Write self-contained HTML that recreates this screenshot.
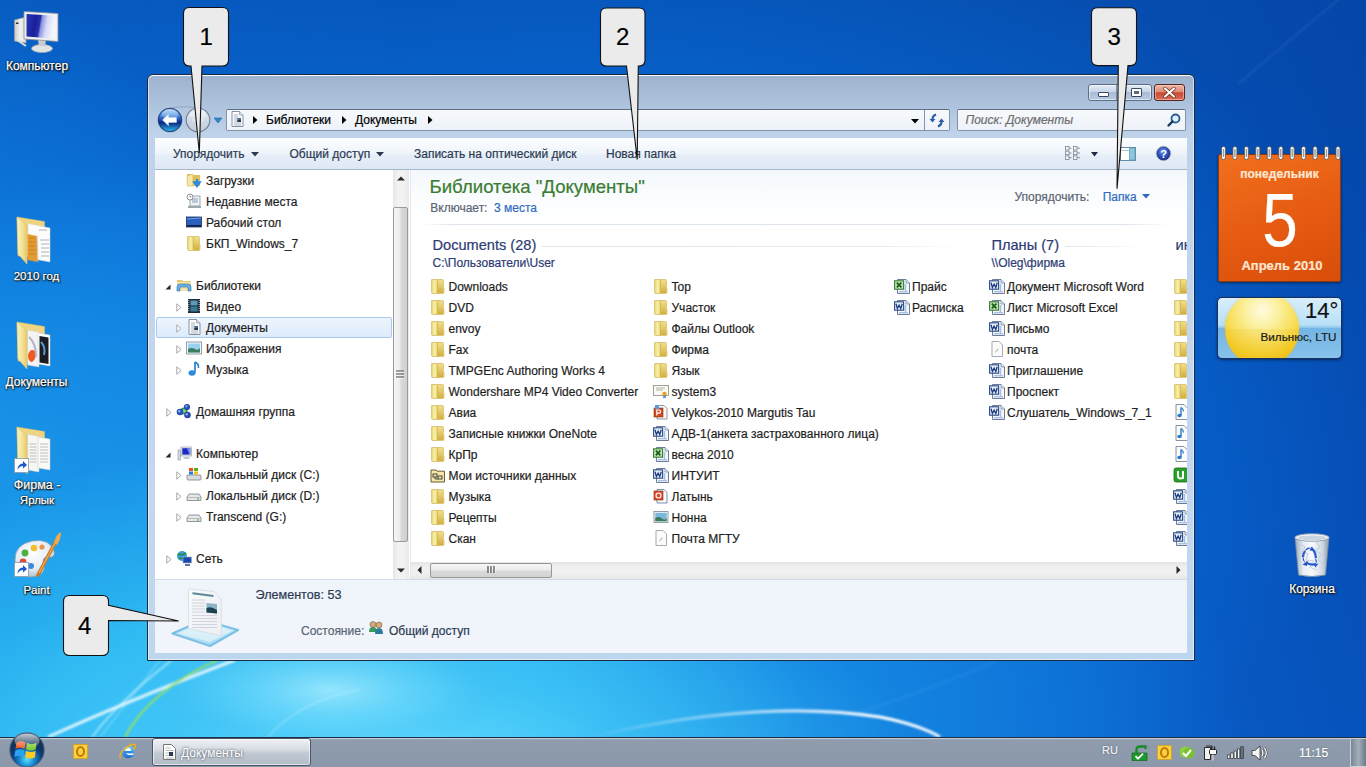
<!DOCTYPE html><html><head><meta charset="utf-8"><style>*{margin:0;padding:0;box-sizing:border-box}
html,body{width:1366px;height:767px;overflow:hidden}
body{position:relative;font-family:"Liberation Sans",sans-serif;font-size:12px;color:#1e1e1e;background:#0a56b8}
.a{position:absolute}
.t{position:absolute;white-space:nowrap;-webkit-text-stroke:.2px currentColor}
svg{display:block;overflow:visible}
.ic{position:absolute}
#bg{left:0;top:0;width:1366px;height:767px;
background:
radial-gradient(ellipse 520px 200px at 400px 767px, rgba(110,225,255,.75) 0%, rgba(80,205,250,.45) 45%, rgba(60,190,245,0) 100%),
radial-gradient(ellipse 950px 640px at 300px 790px, #3cc6f8 0%, #2cb8f2 30%, rgba(26,150,232,.75) 55%, rgba(16,120,220,0) 100%),
radial-gradient(ellipse 360px 760px at -30px 740px, rgba(40,190,250,.9) 0%, rgba(24,150,236,.55) 50%, rgba(10,110,220,0) 100%),
radial-gradient(ellipse 820px 520px at 560px 400px, rgba(8,128,240,.6) 0%, rgba(8,125,238,.42) 55%, rgba(8,120,235,0) 100%),
linear-gradient(90deg, rgba(10,115,225,.35) 0%, rgba(10,80,190,0) 30%, rgba(10,80,190,0) 80%, rgba(2,50,150,.3) 100%),
linear-gradient(180deg,#064eb0 0%,#0654ba 35%,#085cc6 70%,#0960cc 100%);}
.dl{position:absolute;white-space:nowrap;color:#fff;-webkit-text-stroke:.25px #fff;text-shadow:0 1px 1px #000,0 0 2px #000,1px 1px 2px rgba(0,0,0,.8)}
#win{left:147px;top:74px;width:1048px;height:587px;border:1px solid #1c2a40;border-radius:6px 6px 0 0;
background:linear-gradient(180deg,#9db2ce 0px,#a8bdd8 20px,#b4c9e2 42px,#bed3ea 58px,#c4d7ee 70%,#bcd6ee 100%);
box-shadow:inset 0 1px 0 rgba(255,255,255,.9),inset 0 0 0 1px rgba(255,255,255,.55)}
</style></head><body>

<svg width="0" height="0" style="position:absolute">
<defs>
<linearGradient id="gFold" x1="0" y1="0" x2="1" y2="1">
<stop offset="0" stop-color="#fff4c0"/><stop offset="1" stop-color="#e2b84a"/></linearGradient>
<linearGradient id="gFoldB" x1="0" y1="0" x2="0" y2="1">
<stop offset="0" stop-color="#f2d77a"/><stop offset="1" stop-color="#c99a2e"/></linearGradient>
<linearGradient id="gFoldR" x1="0" y1="0" x2="0" y2="1"><stop offset="0" stop-color="#f2de88"/><stop offset="1" stop-color="#d2b040"/></linearGradient>
<linearGradient id="gFoldL" x1="0" y1="0" x2="1" y2="0"><stop offset="0" stop-color="#eadb7c"/><stop offset=".5" stop-color="#f8f0a8"/><stop offset="1" stop-color="#eedc84"/></linearGradient>
<symbol id="fold" viewBox="0 0 16 16">
<path d="M1.6 1.6 H12.6 Q13.4 1.6 13.4 2.4 V9.5 L14 10.3 V14.6 Q14 15.4 13.2 15.4 H2.4 Q1.6 15.4 1.6 14.6z" fill="#e6cc72" stroke="#d2b458" stroke-width=".7"/>
<rect x="2.1" y="2.1" width="5.1" height="12.9" fill="url(#gFoldL)"/>
<rect x="7.4" y="2.1" width="5.6" height="12.9" fill="url(#gFoldR)"/>
<path d="M7.3 2 V15.2" stroke="#c8aa48" stroke-width=".6"/>
</symbol>
<symbol id="doc" viewBox="0 0 16 16">
<path d="M3 .5h7l3.5 3.5v11.5H3z" fill="#fafafa" stroke="#8a96a6" stroke-width=".9"/>
<path d="M10 .5v3.5h3.5" fill="#e0e4ea" stroke="#8a96a6" stroke-width=".7"/>
</symbol>
<symbol id="word" viewBox="0 0 16 16">
<path d="M3.5 1.5h8.5l3.5 3.5v10.5H3.5z" fill="#f4f8fc" stroke="#5a6e90" stroke-width=".9"/>
<path d="M12 1.5v3.5h3.5" fill="#dde6f0" stroke="#5a6e90" stroke-width=".6"/>
<path d="M5 13.8h9" stroke="#8aa8d0" stroke-width="1"/><path d="M11.5 6v7" stroke="#a8c0e0" stroke-width="1.5"/>
<rect x=".6" y="2.8" width="9" height="8.4" fill="#e6eef8" stroke="#2a4a88" stroke-width="1.1"/>
<path d="M2 4.8 L3.4 9.6 L5.1 6.2 L6.8 9.6 L8.2 4.8" fill="none" stroke="#1a3a80" stroke-width="1.3"/>
</symbol>
<symbol id="xls" viewBox="0 0 16 16">
<path d="M3.5 1.5h8.5l3.5 3.5v10.5H3.5z" fill="#f4f8fc" stroke="#5a6e90" stroke-width=".9"/>
<path d="M12 1.5v3.5h3.5" fill="#dde6f0" stroke="#5a6e90" stroke-width=".6"/>
<path d="M5 13.8h9" stroke="#8aa8d0" stroke-width="1"/><path d="M11.5 6v7" stroke="#a8c0e0" stroke-width="1.5"/>
<rect x=".6" y="2.8" width="9" height="8.4" fill="#bfe8b0" stroke="#3a7a3a" stroke-width="1.1"/>
<path d="M2.8 4.6 L7.4 9.4 M7.4 4.6 L2.8 9.4" stroke="#1a5a1a" stroke-width="1.7"/>
</symbol>
<symbol id="ppt" viewBox="0 0 16 16">
<path d="M4 1.5h7l3 3v10.5H4z" fill="#f8fafc" stroke="#8a8a96" stroke-width=".9"/>
<rect x="1" y="4" width="9" height="9" fill="#d24a1e" stroke="#903010" stroke-width=".6"/>
<path d="M3.8 11.5V6h2.2a1.6 1.6 0 0 1 0 3.2H3.8" fill="none" stroke="#fff" stroke-width="1.2"/>
<rect x="2" y="1" width="4" height="4" fill="#5a9ad8"/>
</symbol>
<symbol id="latin" viewBox="0 0 16 16">
<path d="M4 1.5h7l3 3v10.5H4z" fill="#f8fafc" stroke="#6c86ac" stroke-width=".9"/>
<rect x="1" y="3" width="9" height="9" fill="#d85030" stroke="#902010" stroke-width=".6"/>
<circle cx="5.5" cy="7.5" r="2.5" fill="none" stroke="#fff" stroke-width="1.1"/>
</symbol>
<symbol id="img" viewBox="0 0 16 16">
<rect x="1" y="2.5" width="14" height="11" fill="#f4f6f8" stroke="#7a8696" stroke-width=".8"/>
<rect x="2.3" y="3.8" width="11.4" height="8.4" fill="#7ab8e0"/>
<path d="M2.3 9 Q6 7 9 9.5 T13.7 9 V12.2H2.3z" fill="#3a7a5a"/>
</symbol>
<symbol id="cert" viewBox="0 0 16 16">
<rect x=".5" y="2.5" width="15" height="10" fill="#fbfbf6" stroke="#8a8a7a" stroke-width=".8"/>
<path d="M3 5h9M3 7h7" stroke="#a0a090" stroke-width=".8"/>
<circle cx="11.5" cy="11" r="2.2" fill="#e8a020"/>
<path d="M10.5 12.5l-.5 3 1.5-1 1.5 1-.5-3" fill="#4a7ac8"/>
</symbol>
<symbol id="datasrc" viewBox="0 0 16 16">
<path d="M1 3h5l1 1.2h7.5V15H1z" fill="#f6e6a8" stroke="#5a4a20" stroke-width=".9"/>
<rect x="3" y="7" width="4" height="3" fill="none" stroke="#333" stroke-width=".9"/>
<rect x="8" y="9" width="4" height="3" fill="none" stroke="#333" stroke-width=".9"/>
<path d="M5 10v2h3" fill="none" stroke="#333" stroke-width=".8"/>
</symbol>
<symbol id="generic" viewBox="0 0 16 16">
<path d="M3 .5h7l3.5 3.5v11.5H3z" fill="#fbfbfb" stroke="#9aa0a8" stroke-width=".9"/>
<path d="M6 12 Q7 8 10 7 Q9 10 6 12z" fill="#b8c0b0"/>
</symbol>
<symbol id="music" viewBox="0 0 16 16">
<path d="M3 .5h8l3.5 3.5v11.5H3z" fill="#fbfbfb" stroke="#7a8696" stroke-width=".9"/>
<path d="M8 3.5v7.5" stroke="#2a7ac8" stroke-width="1.4"/>
<ellipse cx="6.5" cy="11.5" rx="2.2" ry="1.7" fill="#2a7ac8"/>
<path d="M8 3.5 Q10.5 5 10.5 7.5" fill="none" stroke="#2a7ac8" stroke-width="1.2"/>
</symbol>
<symbol id="utor" viewBox="0 0 16 16">
<rect x="1" y="1" width="14" height="14" rx="2" fill="#2aa02a" stroke="#1a6a1a" stroke-width=".8"/>
<path d="M5 4v5a2.5 2.5 0 0 0 5 0V4" fill="none" stroke="#fff" stroke-width="1.8"/>
<path d="M10 4v8" stroke="#fff" stroke-width="1.8"/>
</symbol>
<symbol id="libdoc" viewBox="0 0 16 16">
<path d="M3 .5h7.5l3.5 3.5v11.5H3z" fill="#fafbfc" stroke="#7a8696" stroke-width=".9"/>
<path d="M10.5 .5v3.5h3.5" fill="#e4e8ee" stroke="#7a8696" stroke-width=".6"/>
<path d="M5 4h4M5 6h4M5 8h3M5 10h3M5 12h7M5 14h7" stroke="#9aa4b2" stroke-width=".8"/>
<rect x="8.3" y="7" width="3.7" height="3.8" fill="#4a6a8a"/><path d="M8.3 9.5q1.8-1.2 3.7 0v1.3H8.3z" fill="#1a2a3a"/>
</symbol>
</defs></svg>

<div id="bg" class="a"></div>
<svg class="a" style="left:0;top:0" width="1366" height="767">
<defs>
<radialGradient id="gGlow1" cx=".5" cy=".5" r=".5"><stop offset="0" stop-color="#b0f0ff" stop-opacity=".75"/><stop offset=".6" stop-color="#70d8fa" stop-opacity=".35"/><stop offset="1" stop-color="#40b0f0" stop-opacity="0"/></radialGradient>
<linearGradient id="gArc" x1="0" y1="0" x2="1" y2="0"><stop offset="0" stop-color="#fff" stop-opacity="0"/><stop offset=".5" stop-color="#fff" stop-opacity=".6"/><stop offset=".85" stop-color="#fff" stop-opacity="1"/><stop offset="1" stop-color="#fff" stop-opacity=".9"/></linearGradient>
<filter id="fBlur" x="-50%" y="-50%" width="200%" height="200%"><feGaussianBlur stdDeviation="1"/></filter>
<filter id="fBlur2" x="-50%" y="-50%" width="200%" height="200%"><feGaussianBlur stdDeviation="1.5"/></filter>
</defs>
<ellipse cx="330" cy="690" rx="180" ry="60" fill="url(#gGlow1)"/>
<g filter="url(#fBlur)">
<path d="M48 737 Q130 700 235 660" fill="none" stroke="#fff" stroke-opacity=".8" stroke-width="3"/>
<path d="M92 737 Q120 700 172 660" fill="none" stroke="#e8fbff" stroke-opacity=".6" stroke-width="1.6"/>
<path d="M100 737 Q128 702 160 660" fill="none" stroke="#e8fbff" stroke-opacity=".4" stroke-width="1.2"/>
<path d="M125 737 Q150 690 218 660" fill="none" stroke="#98e060" stroke-opacity=".9" stroke-width="2.2"/>
<path d="M590 737 Q760 698 880 717 Q920 725 940 737" fill="none" stroke="url(#gArc)" stroke-width="3.2"/>
<path d="M268 737 Q300 700 360 690" fill="none" stroke="#d8f6ff" stroke-opacity=".35" stroke-width="1.5"/>
</g>
<path d="M1340 -2 Q1290 40 1238 84" fill="none" stroke="#8ac0f0" stroke-opacity=".18" stroke-width="1.2" filter="url(#fBlur)"/>
<path d="M860 712 Q930 690 1010 655" fill="none" stroke="#b8e8ff" stroke-opacity=".07" stroke-width="3" filter="url(#fBlur2)"/>
</svg>
<svg class="a" style="left:12px;top:9px" width="48" height="44" viewBox="0 0 48 44">
<defs><linearGradient id="gScr" x1="0" y1="0" x2="1" y2=".15"><stop offset="0" stop-color="#2a3ab8"/><stop offset=".35" stop-color="#1a1e98"/><stop offset=".5" stop-color="#2a30b0"/><stop offset=".56" stop-color="#8a94e0"/><stop offset=".75" stop-color="#d8dcf8"/><stop offset="1" stop-color="#f4f6ff"/></linearGradient>
<linearGradient id="gTow" x1="0" y1="0" x2="1" y2="0"><stop offset="0" stop-color="#c8ccc8"/><stop offset=".5" stop-color="#f0f2ee"/><stop offset="1" stop-color="#d8dcd8"/></linearGradient></defs>
<path d="M2.5 11 L14 8 L14 34 L2.5 32z" fill="url(#gTow)" stroke="#9aa09a" stroke-width=".8"/>
<rect x="4" y="13.5" width="2.5" height="1.5" fill="#333"/>
<path d="M5 31 L14 37" stroke="#d8dcd8" stroke-width="2"/>
<ellipse cx="30" cy="39.5" rx="10.5" ry="4" fill="#e0e4e2" stroke="#a8aeb0" stroke-width=".7"/>
<path d="M26 31 L34 31 L33 37 L27 37z" fill="#c8cccc"/>
<path d="M12 2.5 L46 4.5 V32.5 L12 30z" fill="#eef0f0" stroke="#8a9098" stroke-width=".8"/>
<path d="M14.5 5 L43.5 6.8 V29.8 L14.5 27.6z" fill="url(#gScr)"/>
</svg>
<svg class="a" style="left:8px;top:210px" width="52" height="60" viewBox="0 0 52 60">
<defs><linearGradient id="gFl8210" x1="0" y1="0" x2="1" y2="0"><stop offset="0" stop-color="#fbf3c0"/><stop offset=".6" stop-color="#f2df90"/><stop offset="1" stop-color="#e6c868"/></linearGradient></defs>
<path d="M9 7 L36.5 11.5 L37 46 L10 46z" fill="#efd582" stroke="#d8bc68" stroke-width=".5"/>
<path d="M20 13.5 L42 18 L42 52 L20 48z" fill="#fcfcfc" stroke="#d0d0d0" stroke-width=".5"/><path d="M19.5 24 L29 26 L29.5 52 L19.5 50z" fill="#e39a30"/><path d="M21 28h6M21 32h6M21 36h6M21 40h6M21 44h6" stroke="#c87818" stroke-width=".8"/><path d="M31 20h8M32 30h9M33 34h8M33 38h8M33 42h8M33 46h8" stroke="#a0a0a0" stroke-width=".8"/><path d="M29 26 L30 52" stroke="#c0c0c0" stroke-width=".8"/>
<path d="M9 7 L19 15.5 L19 54 L10 44z" fill="url(#gFl8210)" stroke="#e0c878" stroke-width=".6"/>
</svg>
<svg class="a" style="left:8px;top:315px" width="52" height="60" viewBox="0 0 52 60">
<defs><linearGradient id="gFl8315" x1="0" y1="0" x2="1" y2="0"><stop offset="0" stop-color="#fbf3c0"/><stop offset=".6" stop-color="#f2df90"/><stop offset="1" stop-color="#e6c868"/></linearGradient></defs>
<path d="M9 7 L36.5 11.5 L37 46 L10 46z" fill="#efd582" stroke="#d8bc68" stroke-width=".5"/>
<path d="M19.5 15 L31 17 L31 52 L19.5 50z" fill="#f4f4f6" stroke="#c8c8c8" stroke-width=".5"/><path d="M20 40 Q22 33 27 36 Q29 44 24 47 Q20 47 20 40z" fill="#f05a20"/><path d="M21 22 Q28 28 28 42" fill="none" stroke="#b0b4c0" stroke-width="2"/><path d="M30 18 L42 20 L42 51 L30 49z" fill="#fff" stroke="#ccc" stroke-width=".5"/><path d="M31.5 21 L40.5 22.5 L40.5 49 L31.5 47.5z" fill="#1a1c22"/><path d="M33 27 Q38 32 36 40" fill="none" stroke="#5a9ac8" stroke-width="2"/>
<path d="M9 7 L19 15.5 L19 54 L10 44z" fill="url(#gFl8315)" stroke="#e0c878" stroke-width=".6"/>
</svg>
<svg class="a" style="left:8px;top:420px" width="52" height="60" viewBox="0 0 52 60">
<defs><linearGradient id="gFl8420" x1="0" y1="0" x2="1" y2="0"><stop offset="0" stop-color="#fbf3c0"/><stop offset=".6" stop-color="#f2df90"/><stop offset="1" stop-color="#e6c868"/></linearGradient></defs>
<path d="M9 7 L36.5 11.5 L37 46 L10 46z" fill="#efd582" stroke="#d8bc68" stroke-width=".5"/>
<path d="M19.5 14 L31 16.5 L31 52 L19.5 50z" fill="#f6f6f4" stroke="#c8c8c8" stroke-width=".5"/><path d="M30 17 L42 19 L42 50 L30 48z" fill="#fafaf8" stroke="#c8c8c8" stroke-width=".5"/><path d="M21.5 24h7M21.5 27h7M21.5 30h7M21.5 33h7M21.5 36h7M21.5 39h7M21.5 42h7M32 24h8M32 27h8M32 30h8M32 33h8M32 36h8M32 39h8M32 42h8" stroke="#b8b8b0" stroke-width=".9"/>
<path d="M9 7 L19 15.5 L19 54 L10 44z" fill="url(#gFl8420)" stroke="#e0c878" stroke-width=".6"/>
</svg>
<svg class="a" style="left:14px;top:458px" width="15" height="15" viewBox="0 0 15 15">
<rect x=".5" y=".5" width="14" height="14" fill="#fff" stroke="#8a9aaa" stroke-width=".8"/>
<path d="M3.5 12 Q3.5 6 9 5.5 V3 L13 7 L9 10.5 V8 Q5.5 8 3.5 12z" fill="#1a5ad0"/></svg>
<svg class="a" style="left:12px;top:531px" width="50" height="50" viewBox="0 0 50 50">
<defs><radialGradient id="gPal" cx=".45" cy=".35" r=".7"><stop offset="0" stop-color="#fff"/><stop offset=".6" stop-color="#e4ecf4"/><stop offset="1" stop-color="#a8bccc"/></radialGradient></defs>
<path d="M3 30 Q2 14 20 10 Q38 7 42 20 Q44 27 36 26 Q29 26 32 34 Q34 44 20 46 Q4 47 3 30z" fill="url(#gPal)" stroke="#8a9eb0" stroke-width=".8"/>
<circle cx="11" cy="31" r="3.4" fill="#e04a3a"/><circle cx="13" cy="22" r="3.4" fill="#4ab040"/><circle cx="22" cy="17" r="3.3" fill="#f0c030"/><circle cx="19" cy="35" r="3" fill="#3a8ae0"/><circle cx="30" cy="16" r="2.6" fill="#e8883a" opacity=".9"/>
<path d="M26 44 L44 10" stroke="#c87828" stroke-width="3.6" stroke-linecap="round"/><path d="M27 42 L43 12" stroke="#f0b050" stroke-width="1.2"/>
<path d="M42 12 Q44 3 49 1 Q49 8 45 14z" fill="#f0a848"/>
</svg>
<svg class="a" style="left:14px;top:562px" width="15" height="15" viewBox="0 0 15 15">
<rect x=".5" y=".5" width="14" height="14" fill="#fff" stroke="#8a9aaa" stroke-width=".8"/>
<path d="M3.5 12 Q3.5 6 9 5.5 V3 L13 7 L9 10.5 V8 Q5.5 8 3.5 12z" fill="#1a5ad0"/></svg>
<svg class="a" style="left:1292px;top:532px" width="40" height="46" viewBox="0 0 40 46">
<defs><linearGradient id="gBin" x1="0" y1="0" x2="1" y2="0"><stop offset="0" stop-color="#98aabb"/><stop offset=".25" stop-color="#e8eef4"/><stop offset=".5" stop-color="#f8fafc"/><stop offset=".8" stop-color="#d0dae4"/><stop offset="1" stop-color="#8a9cae"/></linearGradient></defs>
<path d="M3 5 L37 5 L33.5 43 Q20 46 6.5 43z" fill="url(#gBin)" stroke="#7a8a9a" stroke-width=".8"/>
<path d="M8 12 l5 3 l-3 5 l6 2 l-2 6 l7 1 l-3 6 l6 3 M24 10 l4 5 l-5 4 l6 3 l-3 6 l5 4" fill="none" stroke="#c8d2dc" stroke-width="1.2"/>
<ellipse cx="20" cy="5.5" rx="17" ry="3.8" fill="#f0f4f8" stroke="#8a9aaa" stroke-width=".9"/>
<ellipse cx="20" cy="5.8" rx="14" ry="2.4" fill="#c8d4e0"/>
<path d="M12.5 19 Q15 14 19 16 L17.5 18.5 L22 19 L20 14.5 L19 16" fill="#2a5ad0"/>
<path d="M11 24 Q10 28 13 31 L15.5 29 L15 34 L10.5 32.5 L13 31" fill="#1a4ac0"/>
<path d="M23 26 Q26 28 24 32 L21 31 L23.5 35.5 L26.5 31.5 L24 32" fill="#2a5ad0"/>
<path d="M14 30 Q18 34 24 32" fill="none" stroke="#2a5ad0" stroke-width="2.2"/>
<path d="M13 19 Q11 22 11 25" fill="none" stroke="#2a5ad0" stroke-width="2.2"/>
<path d="M19 16 Q23 18 24 26" fill="none" stroke="#2a5ad0" stroke-width="2.2"/>
</svg>
<div class="dl" style="left:37px;top:58.84px;font-size:12px;line-height:14px;transform:translateX(-50%);">Компьютер</div>
<div class="dl" style="left:36.5px;top:270.02px;font-size:11.5px;line-height:13px;transform:translateX(-50%);">2010 год</div>
<div class="dl" style="left:36.5px;top:374.54px;font-size:12px;line-height:14px;transform:translateX(-50%);">Документы</div>
<div class="dl" style="left:37px;top:478.17px;font-size:12.5px;line-height:15px;transform:translateX(-50%);">Фирма -</div>
<div class="dl" style="left:37px;top:493.52px;font-size:11.5px;line-height:13px;transform:translateX(-50%);">Ярлык</div>
<div class="dl" style="left:36.5px;top:584.02px;font-size:11.5px;line-height:13px;transform:translateX(-50%);">Paint</div>
<div class="dl" style="left:1312px;top:582.44px;font-size:12px;line-height:14px;transform:translateX(-50%);">Корзина</div>
<div class="a" style="left:1218px;top:154px;width:123px;height:128px;border:1px solid #8a3a10;border-radius:2px;
background:linear-gradient(160deg,#f2701e 0%,#e65c12 50%,#d84e0a 100%);box-shadow:0 1px 3px rgba(0,0,0,.5)"></div>
<svg class="a" style="left:1221px;top:146px" width="120" height="14"><rect x="0.5" y=".5" width="4" height="13" rx="2" fill="#f8f8f8" stroke="#555" stroke-width=".8"/><rect x="1.8" y="3" width="1.4" height="8" fill="#9a9a9a"/><rect x="11.9" y=".5" width="4" height="13" rx="2" fill="#f8f8f8" stroke="#555" stroke-width=".8"/><rect x="13.2" y="3" width="1.4" height="8" fill="#9a9a9a"/><rect x="23.4" y=".5" width="4" height="13" rx="2" fill="#f8f8f8" stroke="#555" stroke-width=".8"/><rect x="24.7" y="3" width="1.4" height="8" fill="#9a9a9a"/><rect x="34.8" y=".5" width="4" height="13" rx="2" fill="#f8f8f8" stroke="#555" stroke-width=".8"/><rect x="36.1" y="3" width="1.4" height="8" fill="#9a9a9a"/><rect x="46.3" y=".5" width="4" height="13" rx="2" fill="#f8f8f8" stroke="#555" stroke-width=".8"/><rect x="47.6" y="3" width="1.4" height="8" fill="#9a9a9a"/><rect x="57.8" y=".5" width="4" height="13" rx="2" fill="#f8f8f8" stroke="#555" stroke-width=".8"/><rect x="59.0" y="3" width="1.4" height="8" fill="#9a9a9a"/><rect x="69.2" y=".5" width="4" height="13" rx="2" fill="#f8f8f8" stroke="#555" stroke-width=".8"/><rect x="70.5" y="3" width="1.4" height="8" fill="#9a9a9a"/><rect x="80.6" y=".5" width="4" height="13" rx="2" fill="#f8f8f8" stroke="#555" stroke-width=".8"/><rect x="81.9" y="3" width="1.4" height="8" fill="#9a9a9a"/><rect x="92.1" y=".5" width="4" height="13" rx="2" fill="#f8f8f8" stroke="#555" stroke-width=".8"/><rect x="93.4" y="3" width="1.4" height="8" fill="#9a9a9a"/><rect x="103.5" y=".5" width="4" height="13" rx="2" fill="#f8f8f8" stroke="#555" stroke-width=".8"/><rect x="104.8" y="3" width="1.4" height="8" fill="#9a9a9a"/><rect x="115.0" y=".5" width="4" height="13" rx="2" fill="#f8f8f8" stroke="#555" stroke-width=".8"/><rect x="116.3" y="3" width="1.4" height="8" fill="#9a9a9a"/></svg>
<div class="t" style="left:1279.5px;top:166.74px;font-size:12px;line-height:14px;color:#fde6d2;font-weight:bold;transform:translateX(-50%);">понедельник</div>
<div class="t" style="left:1279.5px;top:174.77px;font-size:76px;line-height:89px;color:#fff;transform:translateX(-50%) scaleX(.84);">5</div>
<div class="t" style="left:1282px;top:258.00px;font-size:13px;line-height:15px;color:#fde6d2;font-weight:bold;transform:translateX(-50%);">Апрель 2010</div>
<div class="a" style="left:1217px;top:297px;width:125px;height:62px;border:1px solid #1a3060;border-radius:5px;overflow:hidden;
background:linear-gradient(180deg,#d8eefb 0%,#b8e0f8 45%,#88c4ec 50%,#94ccf0 100%);box-shadow:0 1px 3px rgba(0,0,0,.5)">
<div class="a" style="left:0;top:30px;width:125px;height:32px;background:linear-gradient(180deg,rgba(30,120,200,.2),rgba(30,120,200,.1))"></div>
<div class="a" style="left:7px;top:-6px;width:74px;height:74px;border-radius:50%;background:radial-gradient(circle at 50% 25%,#fffbe0 0%,#fbf0a0 25%,#f8e060 48%,#f4cc28 70%,#eeb818 90%,#e0a020 100%);box-shadow:0 0 3px rgba(240,180,20,.6)"></div>
<div class="a" style="left:7px;top:31px;width:74px;height:37px;border-radius:0 0 37px 37px;background:rgba(230,170,0,.12)"></div>
</div>
<div class="t" style="left:1305px;top:297.58px;font-size:22px;line-height:26px;color:#111;">14°</div>
<div class="t" style="left:1260.5px;top:329.95px;font-size:11.7px;line-height:14px;color:#1a1a1a;">Вильнюс, LTU</div>
<div id="win" class="a"></div>
<div class="a" style="left:1088px;top:84px;width:64px;height:17px;border:1px solid #5d6f88;border-radius:3px;
background:linear-gradient(180deg,#e4ecf6 0%,#c8d6e8 45%,#a9bcd4 50%,#b8cbe2 100%);box-shadow:inset 0 0 0 1px rgba(255,255,255,.5)"></div>
<div class="a" style="left:1116px;top:85px;width:1px;height:15px;background:#7a8ca4"></div>
<div class="a" style="left:1098px;top:92px;width:11px;height:5px;border:1px solid #3a4a60;border-radius:1px;background:#fff"></div>
<div class="a" style="left:1131px;top:88px;width:11px;height:9px;border:1px solid #3a4a60;border-radius:1px;background:#fff"></div>
<div class="a" style="left:1134px;top:91px;width:5px;height:3px;background:#5a6a80"></div>
<div class="a" style="left:1154px;top:84px;width:31px;height:17px;border:1px solid #5a2418;border-radius:3px;
background:linear-gradient(180deg,#eeb8a8 0%,#dc8c78 45%,#c84a30 52%,#d87060 100%);box-shadow:inset 0 0 0 1px rgba(255,210,200,.55)"></div>
<svg class="a" style="left:1163px;top:87px" width="13" height="11"><path d="M2 1.5 L11 9.5 M11 1.5 L2 9.5" stroke="#5a2010" stroke-width="3.4" stroke-linecap="round"/><path d="M2 1.5 L11 9.5 M11 1.5 L2 9.5" stroke="#fff" stroke-width="2.2" stroke-linecap="round"/></svg>

<svg class="a" style="left:155px;top:104px" width="72" height="32">
<defs><linearGradient id="gBack" x1="0" y1="0" x2="0" y2="1"><stop offset="0" stop-color="#b8dcff"/><stop offset=".3" stop-color="#4a90e0"/><stop offset=".5" stop-color="#1a4ab0"/><stop offset=".62" stop-color="#0a2a80"/><stop offset="1" stop-color="#30c0f8"/></linearGradient>
<linearGradient id="gFwd" x1="0" y1="0" x2="0" y2="1"><stop offset="0" stop-color="#e8eef4"/><stop offset=".5" stop-color="#d0dae6"/><stop offset="1" stop-color="#c0ccda"/></linearGradient></defs>
<path d="M4 16 Q4 4 15 4 L43 4 Q55 4 55 16 Q55 28 43 28 L15 28 Q4 28 4 16z" fill="#b8cadf" opacity=".35"/>
<path d="M15 4.2 Q30 1.5 43 4.2" fill="none" stroke="#8ea2ba" stroke-width="1.2" opacity=".7"/>
<circle cx="15" cy="16" r="12.3" fill="#1c3c78" opacity=".45"/>
<circle cx="15" cy="16" r="11.6" fill="url(#gBack)" stroke="#16306a" stroke-width=".9"/>
<ellipse cx="15" cy="10.5" rx="8" ry="5" fill="#fff" opacity=".25"/>
<path d="M7.5 16 L13.5 10.2 L13.5 13.6 L21.5 13.6 L21.5 18.4 L13.5 18.4 L13.5 21.8 Z" fill="#fff" stroke="#c8dcf0" stroke-width=".5" stroke-linejoin="round"/>
<circle cx="43" cy="16" r="11.8" fill="url(#gFwd)" stroke="#6e7e92" stroke-width="1.1"/>
<ellipse cx="43" cy="11" rx="8" ry="5" fill="#fff" opacity=".35"/>
<path d="M50.5 16 L44.5 10.5 V13.8 H36 V18.2 H44.5 V21.5 Z" fill="#dfe6ee" stroke="#b4c0cc" stroke-width=".5" opacity=".8"/>
<path d="M59 14 L67 14 L63 19 Z" fill="#2c8ac8" stroke="#1a5a90" stroke-width=".5"/>
</svg>
<div class="a" style="left:226px;top:109px;width:724px;height:22px;border:1px solid #8493a8;border-top-color:#5e6e84;border-radius:2px;background:linear-gradient(180deg,#f6f9fc,#eef3f9)"></div>
<div class="a" style="left:924px;top:110px;width:1px;height:20px;background:#8493a8"></div>
<svg class="ic" style="left:229px;top:111px;width:16px;height:16px;"><use href="#libdoc"/></svg>
<svg class="a" style="left:253px;top:116px" width="5" height="8"><path d="M0 0 L4.5 4 L0 8z" fill="#000"/></svg>
<div class="t" style="left:266px;top:112.54px;font-size:12px;line-height:14px;color:#000;">Библиотеки</div>
<svg class="a" style="left:342px;top:116px" width="5" height="8"><path d="M0 0 L4.5 4 L0 8z" fill="#000"/></svg>
<div class="t" style="left:355px;top:112.54px;font-size:12px;line-height:14px;color:#000;">Документы</div>
<svg class="a" style="left:428px;top:116px" width="5" height="8"><path d="M0 0 L4.5 4 L0 8z" fill="#000"/></svg>
<svg class="a" style="left:911px;top:119px" width="8" height="5"><path d="M0 0H8L4 4.5z" fill="#000"/></svg>
<svg class="a" style="left:929px;top:113px" width="16" height="15">
<path d="M7 1.5 Q3 3 3.5 7.5" fill="none" stroke="#2b5fa8" stroke-width="2.2"/><path d="M0.5 6 L3.5 9.5 L6.5 6z" fill="#2b5fa8"/>
<path d="M9 13.5 Q13 12 12.5 7.5" fill="none" stroke="#2b5fa8" stroke-width="2.2"/><path d="M9.5 9 L12.5 5.5 L15.5 9z" fill="#2b5fa8"/>
</svg>
<div class="a" style="left:957px;top:109px;width:229px;height:22px;border:1px solid #8493a8;border-top-color:#5e6e84;border-radius:2px;background:linear-gradient(180deg,#f6f9fc,#eef3f9)"></div>
<div class="t" style="left:965.5px;top:112.54px;font-size:12px;line-height:14px;color:#6d6d6d;font-style:italic;">Поиск: Документы</div>
<svg class="a" style="left:1167px;top:113px" width="14" height="14"><circle cx="8.5" cy="5.5" r="4" fill="#dff0ff" stroke="#2a5a90" stroke-width="1.8"/><path d="M5.5 8.5 L1.5 12.5" stroke="#1a3a60" stroke-width="2.4" stroke-linecap="round"/></svg>
<div class="a" style="left:155px;top:138px;width:1032px;height:32px;background:linear-gradient(180deg,#fbfdff 0%,#f0f5fb 45%,#e6eef8 55%,#dde8f5 100%);border-top:1px solid #fff;border-bottom:1px solid #a7b7cb"></div>
<div class="t" style="left:173px;top:147.04px;font-size:12px;line-height:14px;color:#2c3a52;">Упорядочить</div>
<svg class="a" style="left:251px;top:152px" width="8" height="5"><path d="M0 0H8L4.0 4.5z" fill="#2c3a52"/></svg>
<div class="t" style="left:289.5px;top:147.04px;font-size:12px;line-height:14px;color:#2c3a52;">Общий доступ</div>
<svg class="a" style="left:375.5px;top:152px" width="8" height="5"><path d="M0 0H8L4.0 4.5z" fill="#2c3a52"/></svg>
<div class="t" style="left:414px;top:147.04px;font-size:12px;line-height:14px;color:#2c3a52;">Записать на оптический диск</div>
<div class="t" style="left:606px;top:147.04px;font-size:12px;line-height:14px;color:#2c3a52;">Новая папка</div>
<svg class="a" style="left:1065px;top:146px" width="16" height="14">
<g fill="#f4f6f8" stroke="#7a8494" stroke-width=".8">
<rect x=".5" y=".5" width="3.5" height="3.5"/><rect x=".5" y="5.2" width="3.5" height="3.5"/><rect x=".5" y="9.9" width="3.5" height="3.5"/>
<rect x="8.5" y=".5" width="3.5" height="3.5"/><rect x="8.5" y="5.2" width="3.5" height="3.5"/><rect x="8.5" y="9.9" width="3.5" height="3.5"/></g>
<g stroke="#7a8494" stroke-width=".9"><path d="M4 2.2h2.5M4 7h2.5M4 11.7h2.5M12 2.2h3M12 7h3M12 11.7h3"/></g>
</svg>
<svg class="a" style="left:1091px;top:152px" width="7" height="5"><path d="M0 0H7L3.5 4.5z" fill="#1a2a40"/></svg>
<svg class="a" style="left:1120px;top:147px" width="16" height="14">
<rect x=".5" y=".5" width="15" height="13" fill="#fff" stroke="#6a8aa8" stroke-width="1"/>
<rect x="9.5" y="1" width="5.5" height="12" fill="#8cc8dc" stroke="#5a9ab8" stroke-width=".7"/>
<path d="M1 3.5h8" stroke="#b8c8d8" stroke-width="1"/>
</svg>
<svg class="a" style="left:1155px;top:145px" width="17" height="17">
<defs><radialGradient id="gHelp" cx=".45" cy=".35" r=".7"><stop offset="0" stop-color="#6a9af0"/><stop offset=".6" stop-color="#2a4ab8"/><stop offset="1" stop-color="#16308a"/></radialGradient></defs>
<circle cx="8.5" cy="8.5" r="7.8" fill="#c8d0dc" /><circle cx="8.5" cy="8.5" r="6.6" fill="url(#gHelp)" stroke="#1a2a70" stroke-width=".6"/>
<text x="8.5" y="12.6" font-family="Liberation Sans" font-weight="bold" font-size="11" fill="#fff" text-anchor="middle">?</text>
</svg>
<div class="a" style="left:155px;top:170px;width:255px;height:410px;background:#fff"></div>
<div class="a" style="left:393px;top:170px;width:16px;height:409px;background:linear-gradient(90deg,#e6e6e6,#f2f2f2 30%,#f2f2f2 70%,#e8e8e8)"></div>
<div class="a" style="left:393px;top:207px;width:15px;height:335px;border:1px solid #9a9a9a;border-radius:2px;background:linear-gradient(90deg,#f6f6f6 0%,#ececec 45%,#d8d8d8 55%,#d0d0d0 100%)"></div>
<svg class="a" style="left:396px;top:370px" width="8" height="10"><path d="M0 2h8M0 5h8M0 8h8" stroke="#fff" stroke-width="1"/><path d="M0 1h8M0 4h8M0 7h8" stroke="#4a4a4a" stroke-width="1.2"/></svg>
<svg class="a" style="left:397px;top:176px" width="8" height="5"><path d="M0 4.5L4 0.5L8 4.5z" fill="#2a2a2a"/></svg>
<svg class="a" style="left:397px;top:568px" width="8" height="5"><path d="M0 .5L4 4.5L8 .5z" fill="#2a2a2a"/></svg>
<div class="a" style="left:410px;top:170px;width:1px;height:410px;background:#e3e8ef"></div>
<div class="a" style="left:156px;top:317px;width:236px;height:21px;border:1px solid #a9caf0;border-radius:2px;background:linear-gradient(180deg,#eef5fd,#dcebfc)"></div>
<svg class="a" style="left:186px;top:172px" width="16" height="16" viewBox="0 0 16 16"><path d="M1 2h5l1 1h7v11H1z" fill="#e2bf5a"/><path d="M1.2 3.8L7 2v12H1.2z" fill="#f8e8a8" stroke="#d0a848" stroke-width=".5"/><path d="M11 7v5M8.5 10.5L11 14l2.5-3.5z" stroke="#2a8ae0" stroke-width="2.4" fill="#2a8ae0"/></svg>
<div class="t" style="left:206px;top:174.04px;font-size:12px;line-height:14px;color:#1e1e1e;">Загрузки</div>
<svg class="a" style="left:186px;top:193px" width="16" height="16" viewBox="0 0 16 16"><rect x="4" y="3" width="10" height="10" fill="#f0f2f4" stroke="#8a949e" stroke-width=".8"/><rect x="6" y="5" width="6" height="5" fill="#b8c8d8"/><path d="M2 14h13" stroke="#9aa" stroke-width="2"/><circle cx="4" cy="4" r="3" fill="#fff" stroke="#777" stroke-width=".8"/><path d="M4 2.5V4h1.3" stroke="#555" stroke-width=".7" fill="none"/></svg>
<div class="t" style="left:206px;top:195.04px;font-size:12px;line-height:14px;color:#1e1e1e;">Недавние места</div>
<svg class="a" style="left:186px;top:214px" width="16" height="16" viewBox="0 0 16 16"><rect x=".5" y="3" width="15" height="10" fill="#2a60c0" stroke="#1a2a50" stroke-width=".8"/><path d="M1 5L15 4" stroke="#6aa0e8" stroke-width="1"/><rect x="1" y="11" width="14" height="1.6" fill="#10203a"/></svg>
<div class="t" style="left:206px;top:216.04px;font-size:12px;line-height:14px;color:#1e1e1e;">Рабочий стол</div>
<svg class="ic" style="left:186px;top:235px;width:16px;height:16px;"><use href="#fold"/></svg>
<div class="t" style="left:206px;top:237.04px;font-size:12px;line-height:14px;color:#1e1e1e;">БКП_Windows_7</div>
<svg class="a" style="left:176px;top:277px" width="16" height="16" viewBox="0 0 16 16"><path d="M1 3h5l1 1h8v10H1z" fill="#e6c870"/><rect x="1.2" y="5" width="13.5" height="9" fill="#f4e4a8"/><path d="M1 14V10Q1 7 4 7h8q3 0 3 3v4h-3v-3q0-1-1-1H5q-1 0-1 1v3z" fill="#6ab0e0" stroke="#2a70b0" stroke-width=".6"/></svg>
<svg class="a" style="left:165px;top:284px" width="6" height="6"><path d="M5.5 .5V5.5H.5z" fill="#262626"/></svg>
<div class="t" style="left:196px;top:279.04px;font-size:12px;line-height:14px;color:#1e1e1e;">Библиотеки</div>
<svg class="a" style="left:186px;top:298px" width="16" height="16" viewBox="0 0 16 16"><rect x="2" y="1" width="12" height="14" fill="#1a2a3a"/><rect x="4.5" y="2.5" width="7" height="5" fill="#5a9ab8"/><rect x="4.5" y="8.5" width="7" height="5" fill="#3a7a98"/><path d="M2.8 2v12M13.2 2v12" stroke="#c8d0d8" stroke-width="1" stroke-dasharray="1 1"/></svg>
<svg class="a" style="left:176px;top:303px" width="6" height="9"><path d="M.8 .8L5 4.5L.8 8.2z" fill="#fff" stroke="#a6a6a6" stroke-width="1"/></svg>
<div class="t" style="left:206px;top:300.04px;font-size:12px;line-height:14px;color:#1e1e1e;">Видео</div>
<svg class="ic" style="left:186px;top:319px;width:16px;height:16px;"><use href="#libdoc"/></svg>
<svg class="a" style="left:176px;top:324px" width="6" height="9"><path d="M.8 .8L5 4.5L.8 8.2z" fill="#fff" stroke="#a6a6a6" stroke-width="1"/></svg>
<div class="t" style="left:206px;top:321.04px;font-size:12px;line-height:14px;color:#1e1e1e;">Документы</div>
<svg class="a" style="left:186px;top:340px" width="16" height="16" viewBox="0 0 16 16"><rect x=".5" y="2" width="15" height="12" fill="#f6f8fa" stroke="#7a8696" stroke-width=".8"/><rect x="2" y="3.5" width="12" height="9" fill="#9ad0f0"/><path d="M2 9q4-2 7 0t5-1v4.5H2z" fill="#3a8060"/></svg>
<svg class="a" style="left:176px;top:345px" width="6" height="9"><path d="M.8 .8L5 4.5L.8 8.2z" fill="#fff" stroke="#a6a6a6" stroke-width="1"/></svg>
<div class="t" style="left:206px;top:342.04px;font-size:12px;line-height:14px;color:#1e1e1e;">Изображения</div>
<svg class="a" style="left:186px;top:361px" width="16" height="16" viewBox="0 0 16 16"><path d="M9 1v10.5" stroke="#1a7ad0" stroke-width="1.6"/><ellipse cx="6" cy="12" rx="3.5" ry="2.8" fill="#2a8ae0"/><path d="M9 1q4 2 3.5 6" fill="none" stroke="#1a7ad0" stroke-width="1.4"/></svg>
<svg class="a" style="left:176px;top:366px" width="6" height="9"><path d="M.8 .8L5 4.5L.8 8.2z" fill="#fff" stroke="#a6a6a6" stroke-width="1"/></svg>
<div class="t" style="left:206px;top:363.04px;font-size:12px;line-height:14px;color:#1e1e1e;">Музыка</div>
<svg class="a" style="left:176px;top:403px" width="16" height="16" viewBox="0 0 16 16"><circle cx="8" cy="8" r="3.6" fill="#2a9a3a"/><circle cx="8" cy="8" r="1.8" fill="#8ae08a"/><circle cx="4" cy="9" r="3.3" fill="#2a50b8"/><circle cx="3.3" cy="8.2" r="1.2" fill="#8ab0f0"/><circle cx="11" cy="4" r="3.1" fill="#2a50b8"/><circle cx="10.4" cy="3.3" r="1.1" fill="#8ab0f0"/><circle cx="11.5" cy="12" r="3.3" fill="#2a48b0"/><circle cx="10.8" cy="11.2" r="1.2" fill="#8ab0f0"/></svg>
<svg class="a" style="left:166px;top:408px" width="6" height="9"><path d="M.8 .8L5 4.5L.8 8.2z" fill="#fff" stroke="#a6a6a6" stroke-width="1"/></svg>
<div class="t" style="left:196px;top:405.04px;font-size:12px;line-height:14px;color:#1e1e1e;">Домашняя группа</div>
<svg class="a" style="left:176px;top:445px" width="16" height="16" viewBox="0 0 16 16"><rect x="5" y="2" width="10.5" height="9" fill="#e8ecf0" stroke="#98a4b0" stroke-width=".7"/><rect x="6.3" y="3.2" width="8" height="6.4" fill="#1a2ac0"/><path d="M11 3.2h3.3v6.4h-1z" fill="#7a90e8"/><rect x="2" y="5" width="2.3" height="10" fill="#d8dce0" stroke="#8a949e" stroke-width=".6"/><path d="M7.5 13h6" stroke="#b0b8c0" stroke-width="1.5"/></svg>
<svg class="a" style="left:165px;top:452px" width="6" height="6"><path d="M5.5 .5V5.5H.5z" fill="#262626"/></svg>
<div class="t" style="left:196px;top:447.04px;font-size:12px;line-height:14px;color:#1e1e1e;">Компьютер</div>
<svg class="a" style="left:186px;top:466px" width="16" height="16" viewBox="0 0 16 16"><rect x="1" y="9" width="14" height="5" rx="1" fill="#d8dcdf" stroke="#7a8088" stroke-width=".8"/><path d="M3 2h4v3H3z" fill="#f05020"/><path d="M8 2h4v3H8z" fill="#50b020"/><path d="M3 5.5h4v3H3z" fill="#2080e0"/><path d="M8 5.5h4v3H8z" fill="#f0c020"/></svg>
<svg class="a" style="left:176px;top:471px" width="6" height="9"><path d="M.8 .8L5 4.5L.8 8.2z" fill="#fff" stroke="#a6a6a6" stroke-width="1"/></svg>
<div class="t" style="left:206px;top:468.04px;font-size:12px;line-height:14px;color:#1e1e1e;">Локальный диск (C:)</div>
<svg class="a" style="left:186px;top:487px" width="16" height="16" viewBox="0 0 16 16"><path d="M1 10l2-3h10l2 3v3.5H1z" fill="#e6e8ea" stroke="#7a8088" stroke-width=".8"/><path d="M1.5 10.5h13" stroke="#999" stroke-width=".6"/><rect x="11" y="11.5" width="2" height="1" fill="#3a3"/></svg>
<svg class="a" style="left:176px;top:492px" width="6" height="9"><path d="M.8 .8L5 4.5L.8 8.2z" fill="#fff" stroke="#a6a6a6" stroke-width="1"/></svg>
<div class="t" style="left:206px;top:489.04px;font-size:12px;line-height:14px;color:#1e1e1e;">Локальный диск (D:)</div>
<svg class="a" style="left:186px;top:508px" width="16" height="16" viewBox="0 0 16 16"><path d="M1 10l2-3h10l2 3v3.5H1z" fill="#e6e8ea" stroke="#7a8088" stroke-width=".8"/><path d="M1.5 10.5h13" stroke="#999" stroke-width=".6"/><rect x="11" y="11.5" width="2" height="1" fill="#3a3"/></svg>
<svg class="a" style="left:176px;top:513px" width="6" height="9"><path d="M.8 .8L5 4.5L.8 8.2z" fill="#fff" stroke="#a6a6a6" stroke-width="1"/></svg>
<div class="t" style="left:206px;top:510.04px;font-size:12px;line-height:14px;color:#1e1e1e;">Transcend (G:)</div>
<svg class="a" style="left:176px;top:550px" width="16" height="16" viewBox="0 0 16 16"><circle cx="6" cy="6" r="5" fill="#3aa0e0"/><path d="M2 4q4 2 8-1M3 8q3 1 6 0" stroke="#2a8a3a" stroke-width="1.6" fill="none"/><rect x="7" y="7" width="8.5" height="6" fill="#1a4ab0" stroke="#aab" stroke-width=".6"/><path d="M9 15h5" stroke="#2a4a8a" stroke-width="1.5"/></svg>
<svg class="a" style="left:166px;top:555px" width="6" height="9"><path d="M.8 .8L5 4.5L.8 8.2z" fill="#fff" stroke="#a6a6a6" stroke-width="1"/></svg>
<div class="t" style="left:196px;top:552.04px;font-size:12px;line-height:14px;color:#1e1e1e;">Сеть</div>
<div class="a" style="left:411px;top:170px;width:776px;height:392px;background:linear-gradient(180deg,#f4f8fc 0px,#fdfeff 40px,#fff 60px)"></div>
<div class="t" style="left:429.5px;top:176.26px;font-size:18.6px;line-height:22px;color:#3a7d32;">Библиотека "Документы"</div>
<div class="t" style="left:430.3px;top:200.54px;font-size:12px;line-height:14px;color:#5b6573;">Включает:</div>
<div class="t" style="left:494px;top:200.54px;font-size:12px;line-height:14px;color:#2e6bc0;">3 места</div>
<div class="t" style="left:1014.5px;top:189.84px;font-size:12px;line-height:14px;color:#5b6573;">Упорядочить:</div>
<div class="t" style="left:1102.7px;top:189.84px;font-size:12px;line-height:14px;color:#2e6bc0;">Папка</div>
<svg class="a" style="left:1142px;top:194px" width="8" height="5"><path d="M0 0H8L4.0 4.5z" fill="#2e6bc0"/></svg>
<div class="a" style="left:424px;top:224px;width:745px;height:1px;background:linear-gradient(90deg,rgba(220,226,234,0),#dde3ea 30px,#dde3ea 700px,rgba(220,226,234,0))"></div>
<div class="t" style="left:432.5px;top:237.24px;font-size:14.6px;line-height:17px;color:#2d3b74;">Documents (28)</div>
<div class="a" style="left:542px;top:246px;width:420px;height:1px;background:linear-gradient(90deg,#dfe4ec,#e6eaf0 80%,rgba(230,234,240,0))"></div>
<div class="t" style="left:432.5px;top:256.14px;font-size:12px;line-height:14px;color:#2d3b74;">C:\Пользователи\User</div>
<div class="t" style="left:991.5px;top:237.24px;font-size:14.6px;line-height:17px;color:#2d3b74;">Планы (7)</div>
<div class="a" style="left:1065px;top:246px;width:82px;height:1px;background:linear-gradient(90deg,#dfe4ec,rgba(230,234,240,0))"></div>
<div class="t" style="left:991.5px;top:256.14px;font-size:12px;line-height:14px;color:#2d3b74;">\\Oleg\фирма</div>
<div class="a" style="left:1170px;top:230px;width:17px;height:30px;overflow:hidden">
<div class="t" style="left:5.5px;top:7.24px;font-size:14.6px;line-height:17px;color:#2d3b74;">ин</div>
</div>
<svg class="ic" style="left:430px;top:278px;width:16px;height:16px;"><use href="#fold"/></svg>
<div class="t" style="left:448.5px;top:279.64px;font-size:12px;line-height:14px;">Downloads</div>
<svg class="ic" style="left:430px;top:299px;width:16px;height:16px;"><use href="#fold"/></svg>
<div class="t" style="left:448.5px;top:300.64px;font-size:12px;line-height:14px;">DVD</div>
<svg class="ic" style="left:430px;top:320px;width:16px;height:16px;"><use href="#fold"/></svg>
<div class="t" style="left:448.5px;top:321.64px;font-size:12px;line-height:14px;">envoy</div>
<svg class="ic" style="left:430px;top:341px;width:16px;height:16px;"><use href="#fold"/></svg>
<div class="t" style="left:448.5px;top:342.64px;font-size:12px;line-height:14px;">Fax</div>
<svg class="ic" style="left:430px;top:362px;width:16px;height:16px;"><use href="#fold"/></svg>
<div class="t" style="left:448.5px;top:363.64px;font-size:12px;line-height:14px;">TMPGEnc Authoring Works 4</div>
<svg class="ic" style="left:430px;top:383px;width:16px;height:16px;"><use href="#fold"/></svg>
<div class="t" style="left:448.5px;top:384.64px;font-size:12px;line-height:14px;">Wondershare MP4 Video Converter</div>
<svg class="ic" style="left:430px;top:404px;width:16px;height:16px;"><use href="#fold"/></svg>
<div class="t" style="left:448.5px;top:405.64px;font-size:12px;line-height:14px;">Авиа</div>
<svg class="ic" style="left:430px;top:425px;width:16px;height:16px;"><use href="#fold"/></svg>
<div class="t" style="left:448.5px;top:426.64px;font-size:12px;line-height:14px;">Записные книжки OneNote</div>
<svg class="ic" style="left:430px;top:446px;width:16px;height:16px;"><use href="#fold"/></svg>
<div class="t" style="left:448.5px;top:447.64px;font-size:12px;line-height:14px;">КрПр</div>
<svg class="ic" style="left:430px;top:467px;width:16px;height:16px;"><use href="#datasrc"/></svg>
<div class="t" style="left:448.5px;top:468.64px;font-size:12px;line-height:14px;">Мои источники данных</div>
<svg class="ic" style="left:430px;top:488px;width:16px;height:16px;"><use href="#fold"/></svg>
<div class="t" style="left:448.5px;top:489.64px;font-size:12px;line-height:14px;">Музыка</div>
<svg class="ic" style="left:430px;top:509px;width:16px;height:16px;"><use href="#fold"/></svg>
<div class="t" style="left:448.5px;top:510.64px;font-size:12px;line-height:14px;">Рецепты</div>
<svg class="ic" style="left:430px;top:530px;width:16px;height:16px;"><use href="#fold"/></svg>
<div class="t" style="left:448.5px;top:531.64px;font-size:12px;line-height:14px;">Скан</div>
<svg class="ic" style="left:653px;top:278px;width:16px;height:16px;"><use href="#fold"/></svg>
<div class="t" style="left:671.5px;top:279.64px;font-size:12px;line-height:14px;">Top</div>
<svg class="ic" style="left:653px;top:299px;width:16px;height:16px;"><use href="#fold"/></svg>
<div class="t" style="left:671.5px;top:300.64px;font-size:12px;line-height:14px;">Участок</div>
<svg class="ic" style="left:653px;top:320px;width:16px;height:16px;"><use href="#fold"/></svg>
<div class="t" style="left:671.5px;top:321.64px;font-size:12px;line-height:14px;">Файлы Outlook</div>
<svg class="ic" style="left:653px;top:341px;width:16px;height:16px;"><use href="#fold"/></svg>
<div class="t" style="left:671.5px;top:342.64px;font-size:12px;line-height:14px;">Фирма</div>
<svg class="ic" style="left:653px;top:362px;width:16px;height:16px;"><use href="#fold"/></svg>
<div class="t" style="left:671.5px;top:363.64px;font-size:12px;line-height:14px;">Язык</div>
<svg class="ic" style="left:653px;top:383px;width:16px;height:16px;"><use href="#cert"/></svg>
<div class="t" style="left:671.5px;top:384.64px;font-size:12px;line-height:14px;">system3</div>
<svg class="ic" style="left:653px;top:404px;width:16px;height:16px;"><use href="#ppt"/></svg>
<div class="t" style="left:671.5px;top:405.64px;font-size:12px;line-height:14px;">Velykos-2010 Margutis Tau</div>
<svg class="ic" style="left:653px;top:425px;width:16px;height:16px;"><use href="#word"/></svg>
<div class="t" style="left:671.5px;top:426.64px;font-size:12px;line-height:14px;">АДВ-1(анкета застрахованного лица)</div>
<svg class="ic" style="left:653px;top:446px;width:16px;height:16px;"><use href="#xls"/></svg>
<div class="t" style="left:671.5px;top:447.64px;font-size:12px;line-height:14px;">весна 2010</div>
<svg class="ic" style="left:653px;top:467px;width:16px;height:16px;"><use href="#word"/></svg>
<div class="t" style="left:671.5px;top:468.64px;font-size:12px;line-height:14px;">ИНТУИТ</div>
<svg class="ic" style="left:653px;top:488px;width:16px;height:16px;"><use href="#latin"/></svg>
<div class="t" style="left:671.5px;top:489.64px;font-size:12px;line-height:14px;">Латынь</div>
<svg class="ic" style="left:653px;top:509px;width:16px;height:16px;"><use href="#img"/></svg>
<div class="t" style="left:671.5px;top:510.64px;font-size:12px;line-height:14px;">Нонна</div>
<svg class="ic" style="left:653px;top:530px;width:16px;height:16px;"><use href="#generic"/></svg>
<div class="t" style="left:671.5px;top:531.64px;font-size:12px;line-height:14px;">Почта МГТУ</div>
<svg class="ic" style="left:894px;top:278px;width:16px;height:16px;"><use href="#xls"/></svg>
<div class="t" style="left:912px;top:279.64px;font-size:12px;line-height:14px;">Прайс</div>
<svg class="ic" style="left:894px;top:299px;width:16px;height:16px;"><use href="#word"/></svg>
<div class="t" style="left:912px;top:300.64px;font-size:12px;line-height:14px;">Расписка</div>
<svg class="ic" style="left:989px;top:278px;width:16px;height:16px;"><use href="#word"/></svg>
<div class="t" style="left:1007px;top:279.64px;font-size:12px;line-height:14px;">Документ Microsoft Word</div>
<svg class="ic" style="left:989px;top:299px;width:16px;height:16px;"><use href="#xls"/></svg>
<div class="t" style="left:1007px;top:300.64px;font-size:12px;line-height:14px;">Лист Microsoft Excel</div>
<svg class="ic" style="left:989px;top:320px;width:16px;height:16px;"><use href="#word"/></svg>
<div class="t" style="left:1007px;top:321.64px;font-size:12px;line-height:14px;">Письмо</div>
<svg class="ic" style="left:989px;top:341px;width:16px;height:16px;"><use href="#generic"/></svg>
<div class="t" style="left:1007px;top:342.64px;font-size:12px;line-height:14px;">почта</div>
<svg class="ic" style="left:989px;top:362px;width:16px;height:16px;"><use href="#word"/></svg>
<div class="t" style="left:1007px;top:363.64px;font-size:12px;line-height:14px;">Приглашение</div>
<svg class="ic" style="left:989px;top:383px;width:16px;height:16px;"><use href="#word"/></svg>
<div class="t" style="left:1007px;top:384.64px;font-size:12px;line-height:14px;">Проспект</div>
<svg class="ic" style="left:989px;top:404px;width:16px;height:16px;"><use href="#word"/></svg>
<div class="t" style="left:1007px;top:405.64px;font-size:12px;line-height:14px;">Слушатель_Windows_7_1</div>
<div class="a" style="left:1170px;top:270px;width:17px;height:290px;overflow:hidden">
<svg class="ic" style="left:3px;top:8px;width:16px;height:16px"><use href="#fold"/></svg>
<svg class="ic" style="left:3px;top:29px;width:16px;height:16px"><use href="#fold"/></svg>
<svg class="ic" style="left:3px;top:50px;width:16px;height:16px"><use href="#fold"/></svg>
<svg class="ic" style="left:3px;top:71px;width:16px;height:16px"><use href="#fold"/></svg>
<svg class="ic" style="left:3px;top:92px;width:16px;height:16px"><use href="#fold"/></svg>
<svg class="ic" style="left:3px;top:113px;width:16px;height:16px"><use href="#fold"/></svg>
<svg class="ic" style="left:3px;top:134px;width:16px;height:16px"><use href="#music"/></svg>
<svg class="ic" style="left:3px;top:155px;width:16px;height:16px"><use href="#music"/></svg>
<svg class="ic" style="left:3px;top:176px;width:16px;height:16px"><use href="#music"/></svg>
<svg class="ic" style="left:3px;top:197px;width:16px;height:16px"><use href="#utor"/></svg>
<svg class="ic" style="left:3px;top:218px;width:16px;height:16px"><use href="#word"/></svg>
<svg class="ic" style="left:3px;top:239px;width:16px;height:16px"><use href="#word"/></svg>
<svg class="ic" style="left:3px;top:260px;width:16px;height:16px"><use href="#word"/></svg>
</div>
<div class="a" style="left:411px;top:562px;width:776px;height:17px;background:linear-gradient(180deg,#e4e4e4,#f0f0f0 30%,#f0f0f0 70%,#e6e6e6)"></div>
<div class="a" style="left:430px;top:563px;width:122px;height:15px;border:1px solid #979797;border-radius:2px;background:linear-gradient(180deg,#f6f6f6 0%,#ececec 45%,#dadada 55%,#d2d2d2 100%)"></div>
<svg class="a" style="left:487px;top:566px" width="10" height="8"><path d="M2 0v7M5 0v7M8 0v7" stroke="#fff" stroke-width="1"/><path d="M1 0v7M4 0v7M7 0v7" stroke="#4a4a4a" stroke-width="1.2"/></svg>
<svg class="a" style="left:417px;top:566px" width="5" height="8"><path d="M4.5 0L.5 4L4.5 8z" fill="#2a2a2a"/></svg>
<svg class="a" style="left:1176px;top:566px" width="5" height="8"><path d="M.5 0L4.5 4L.5 8z" fill="#2a2a2a"/></svg>
<div class="a" style="left:155px;top:579px;width:1032px;height:74px;background:linear-gradient(180deg,#eff3fa,#f1f5fb);border-top:1px solid #d3dbe6"></div>
<svg class="a" style="left:170px;top:586px" width="72" height="62" viewBox="0 0 72 62">
<defs><linearGradient id="gTray" x1="0" y1="0" x2="0" y2="1"><stop offset="0" stop-color="#d8f0fb"/><stop offset="1" stop-color="#a8daf2"/></linearGradient>
<linearGradient id="gPage" x1="0" y1="0" x2="1" y2="1"><stop offset="0" stop-color="#f8f9fb"/><stop offset="1" stop-color="#eceef2"/></linearGradient></defs>
<path d="M2.5 47.5 L33 34 L68 44 L40 60 Z" fill="url(#gTray)" stroke="#7cc0e4" stroke-width="2.2" stroke-linejoin="round"/>
<path d="M8 47.5 L33 37 L62 44.5 L40 56 Z" fill="#e6f5fc" opacity=".7"/>
<path d="M18.5 3 L44 5.5 Q48 9 51 14 L51.5 50 L18.5 42.5 Z" fill="url(#gPage)" stroke="#d6dae0" stroke-width=".8"/>
<path d="M22.5 7.3 L43.5 10" stroke="#5a8a96" stroke-width="2"/>
<g stroke="#c4c6d2" stroke-width=".7"><path d="M22 14h13M22 17h13M22 20h13M22 23h13M22 26h13M22 29.5h25M22 32.5h25M22 35.5h25M22 38.5h25M22 41.5h25"/></g>
<path d="M36.5 17 L47 18 L47 27.5 L36.5 26.5z" fill="#8ab4c8"/><path d="M36.5 22 Q41 20 47 24 V27.5 L36.5 26.5z" fill="#1e4050"/>
</svg>
<div class="t" style="left:255.5px;top:587.53px;font-size:12.6px;line-height:15px;color:#2c3a52;">Элементов: 53</div>
<div class="t" style="left:301px;top:623.84px;font-size:12px;line-height:14px;color:#5b6573;">Состояние:</div>
<svg class="a" style="left:368px;top:620px" width="16" height="16" viewBox="0 0 16 16">
<circle cx="5" cy="4.5" r="3" fill="#d8a878" stroke="#5a4a30" stroke-width=".5"/><path d="M1 12q0-5 4-5t4 5z" fill="#3a9a5a"/>
<circle cx="11" cy="5" r="3" fill="#d8a878" stroke="#5a4a30" stroke-width=".5"/><path d="M7 14q0-6 4-6t4 6z" fill="#2a7a9a"/>
</svg>
<div class="t" style="left:389px;top:623.84px;font-size:12px;line-height:14px;color:#2c3a52;">Общий доступ</div>
<div class="a" style="left:0;top:737px;width:1366px;height:30px;border-top:1px solid #1e2e44;
background:linear-gradient(180deg,#a4b2c2 0%,#8e9cae 8%,#8a98aa 100%);box-shadow:inset 0 1px 0 rgba(255,255,255,.35)"></div>
<svg class="a" style="left:8px;top:731px" width="38" height="38" viewBox="0 0 38 38">
<defs><radialGradient id="gOrb" cx=".5" cy=".78" r=".62"><stop offset="0" stop-color="#5ae0ff"/><stop offset=".35" stop-color="#1a8ad0"/><stop offset=".7" stop-color="#0a3a78"/><stop offset="1" stop-color="#16304e"/></radialGradient>
<linearGradient id="gOrbHi" x1="0" y1="0" x2="0" y2="1"><stop offset="0" stop-color="#fff" stop-opacity=".75"/><stop offset="1" stop-color="#fff" stop-opacity=".05"/></linearGradient></defs>
<circle cx="19" cy="19" r="18" fill="#6a7e96" opacity=".7"/>
<circle cx="19" cy="19" r="17" fill="url(#gOrb)" stroke="#3a5a7a" stroke-width=".8"/>
<path d="M8.5 11.5 Q12.5 9 17.5 11.5 L16.5 18 Q12 15.5 7.5 18z" fill="#f25a22"/>
<path d="M19 11.8 Q23.5 14.5 28.5 11.8 L27.8 18.3 Q23 20.8 18.2 18.3z" fill="#84cc30"/>
<path d="M7.3 19.5 Q12 17 16.3 19.5 L15.3 26 Q11 23.5 6.3 26z" fill="#2aa2f0"/>
<path d="M18 19.8 Q22.8 22.3 27.6 19.8 L27 26.3 Q22 28.8 17.2 26.3z" fill="#fcca22"/>
<ellipse cx="19" cy="10" rx="12.5" ry="7.5" fill="url(#gOrbHi)"/>
</svg>
<svg class="a" style="left:73px;top:744px" width="15" height="15" viewBox="0 0 15 15">
<rect x=".5" y=".5" width="14" height="14" rx="1" fill="#f8d040" stroke="#d8a010" stroke-width=".8"/>
<ellipse cx="7.5" cy="7.5" rx="3.5" ry="4.5" fill="none" stroke="#c07808" stroke-width="2"/></svg>
<svg class="a" style="left:118px;top:742px" width="19" height="19" viewBox="0 0 19 19">
<defs><linearGradient id="gIE" x1="0" y1="0" x2="0" y2="1"><stop offset="0" stop-color="#7ad0ff"/><stop offset="1" stop-color="#1a6ad0"/></linearGradient></defs>
<circle cx="10" cy="10" r="6.2" fill="url(#gIE)"/>
<circle cx="10" cy="8.8" r="3" fill="#f0f8ff"/><rect x="6" y="9" width="8.5" height="2" fill="#2a8ae0"/><rect x="10" y="11" width="6" height="3" fill="#2a8ae0"/>
<path d="M9.5 12.2 h6" stroke="#f0f8ff" stroke-width="1.6"/>
<path d="M2.5 16.5 Q0.5 13 6 7.5 Q13 1.5 16.8 2.5 Q18.5 4 15.5 7.5" fill="none" stroke="#e8b020" stroke-width="1.6"/>
</svg>
<div class="a" style="left:152px;top:738px;width:159px;height:28px;border:1px solid #4a5666;border-radius:3px;
background:linear-gradient(180deg,#eef0f4 0%,#d8dde4 40%,#c0c8d2 55%,#b4bcc8 100%);box-shadow:inset 0 0 0 1px rgba(255,255,255,.6)"></div>
<svg class="a" style="left:163px;top:744px" width="13" height="16" viewBox="0 0 13 16">
<path d="M.5 .5h8l4 4v11H.5z" fill="#fff" stroke="#6a6a6a" stroke-width=".9"/><path d="M2.5 4h5M2.5 6.5h8M2.5 9h8M2.5 11.5h8M2.5 14h8" stroke="#9a9a9a" stroke-width=".7"/><rect x="6" y="8" width="4" height="4" fill="#2a3a4a"/></svg>
<div class="t" style="left:181px;top:746.14px;font-size:12px;line-height:14px;color:#fff;text-shadow:0 0 3px rgba(60,70,90,.9),0 0 1px rgba(0,0,0,.6);">Документы</div>
<div class="t" style="left:1102px;top:743.69px;font-size:11px;line-height:13px;color:#f0f4f8;text-shadow:0 0 2px rgba(0,0,0,.5);">RU</div>
<svg class="a" style="left:1131px;top:745px" width="17" height="16" viewBox="0 0 17 16">
<path d="M1 8h15v7.5H1z" fill="#1a9a2a" stroke="#0a5a10" stroke-width=".6"/><path d="M5.5 8V4.5q0-3 4-3h5v2.5" fill="none" stroke="#1a8a2a" stroke-width="2.4"/>
<path d="M4.5 11.2l2.5 2.5 5-5" fill="none" stroke="#fff" stroke-width="1.8"/></svg>
<svg class="a" style="left:1157px;top:745px" width="15" height="15" viewBox="0 0 15 15">
<rect x=".5" y=".5" width="14" height="14" rx="1" fill="#f8d040" stroke="#d8a010" stroke-width=".8"/><ellipse cx="7.5" cy="7.5" rx="3.5" ry="4.5" fill="none" stroke="#c07808" stroke-width="2"/></svg>
<svg class="a" style="left:1179px;top:745px" width="16" height="16" viewBox="0 0 16 16">
<circle cx="6" cy="7" r="5.5" fill="#8ad040"/><circle cx="10" cy="8" r="5.5" fill="#7ac030"/><path d="M4 8l3 3 5-6" fill="none" stroke="#fff" stroke-width="2"/></svg>
<svg class="a" style="left:1203px;top:744px" width="16" height="18" viewBox="0 0 16 18">
<path d="M1.5 3.5h6v12h-6z" fill="#f0f0f0" stroke="#2a2a2a" stroke-width="1"/><path d="M3 2h6v2" fill="none" stroke="#2a2a2a" stroke-width="1"/>
<rect x="6.5" y="5.5" width="7" height="5" rx="1" fill="#fafafa" stroke="#222" stroke-width="1"/><path d="M8.5 2.5v3M11.5 2.5v3" stroke="#222" stroke-width="1.3"/><path d="M10 10.5v6" stroke="#f0f0f0" stroke-width="1.6"/><path d="M10 10.5v6" stroke="#333" stroke-width=".4"/></svg>
<svg class="a" style="left:1227px;top:746px" width="17" height="13" viewBox="0 0 17 13">
<g fill="#fafafa" stroke="#2a3038" stroke-width=".7"><rect x=".5" y="9" width="2.4" height="3.5"/><rect x="3.8" y="7" width="2.4" height="5.5"/><rect x="7.1" y="5" width="2.4" height="7.5"/><rect x="10.4" y="3" width="2.4" height="9.5"/></g><rect x="13.7" y=".8" width="2.6" height="11.7" fill="#6a7480" stroke="#2a3038" stroke-width=".7"/></svg>
<svg class="a" style="left:1251px;top:745px" width="18" height="16" viewBox="0 0 18 16">
<path d="M1 5.5h3l5-4.5v14l-5-4.5H1z" fill="#f4f4f4" stroke="#333" stroke-width=".8"/>
<path d="M11 5q2 3 0 6M13.5 3q3.5 5 0 10" fill="none" stroke="#333" stroke-width="2.4"/>
<path d="M11 5q2 3 0 6M13.5 3q3.5 5 0 10" fill="none" stroke="#f4f4f4" stroke-width="1.4"/></svg>

<div class="t" style="left:1299px;top:746.04px;font-size:12px;line-height:14px;color:#fff;text-shadow:0 0 2px rgba(0,0,0,.4);">11:15</div>
<div class="a" style="left:1350px;top:738px;width:16px;height:29px;border:1px solid #c8d0da;border-right:0;background:linear-gradient(90deg,#7a8694,#a4aebb 50%,#6e7a88)"></div>
<svg class="a" style="left:0;top:0" width="1366" height="767"><path d="M189.5,7.5 H222.5 Q228.5,7.5 228.5,13.5 V60 Q228.5,66 222.5,66 H202 L199.3,153 L191,66 H189.5 Q183.5,66 183.5,60 V13.5 Q183.5,7.5 189.5,7.5Z" fill="#ebebeb" stroke="#111" stroke-width="1.1" stroke-linejoin="miter"/></svg>
<div class="t" style="left:199.5px;top:22.68px;font-size:24px;line-height:28px;color:#000;">1</div>
<svg class="a" style="left:0;top:0" width="1366" height="767"><path d="M606.5,8 H639 Q645,8 645,14 V60 Q645,66 639,66 H638.3 L637.2,159.5 L626.5,66 H606.5 Q600.5,66 600.5,60 V14 Q600.5,8 606.5,8Z" fill="#ebebeb" stroke="#111" stroke-width="1.1" stroke-linejoin="miter"/></svg>
<div class="t" style="left:616px;top:23.08px;font-size:24px;line-height:28px;color:#000;">2</div>
<svg class="a" style="left:0;top:0" width="1366" height="767"><path d="M1097.5,7.7 H1130.5 Q1136.5,7.7 1136.5,13.7 V59.599999999999994 Q1136.5,65.6 1130.5,65.6 H1128 L1117,188.7 L1118.3,65.6 H1097.5 Q1091.5,65.6 1091.5,59.599999999999994 V13.7 Q1091.5,7.7 1097.5,7.7Z" fill="#ebebeb" stroke="#111" stroke-width="1.1" stroke-linejoin="miter"/></svg>
<div class="t" style="left:1107.5px;top:22.68px;font-size:24px;line-height:28px;color:#000;">3</div>
<svg class="a" style="left:0;top:0" width="1366" height="767"><path d="M69.5,595.5 H102.5 Q108.5,595.5 108.5,601.5 V605.3 L178.6,621 L108.5,620.5 V649.5 Q108.5,655.5 102.5,655.5 H69.5 Q63.5,655.5 63.5,649.5 V601.5 Q63.5,595.5 69.5,595.5Z" fill="#ebebeb" stroke="#111" stroke-width="1.1" stroke-linejoin="miter"/></svg>
<div class="t" style="left:78px;top:611.68px;font-size:24px;line-height:28px;color:#000;">4</div>
</body></html>
